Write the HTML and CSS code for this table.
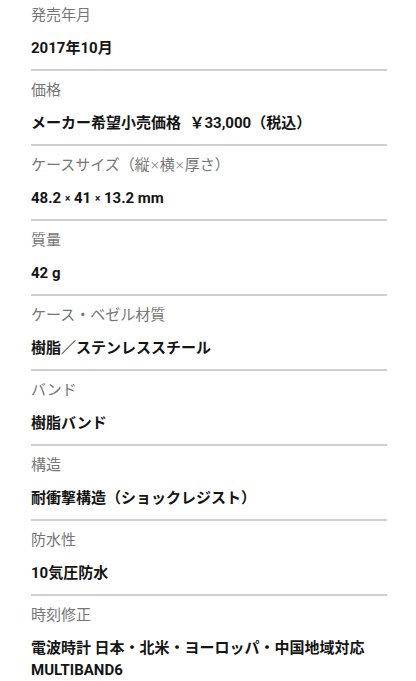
FILE: index.html
```html
<!DOCTYPE html>
<html lang="ja">
<head>
<meta charset="UTF-8">
<meta name="viewport" content="width=device-width, initial-scale=1.0">
<title>製品仕様</title>
<link rel="stylesheet" href="styles.css">
</head>
<body>
  <!-- Spec list -->
  <dl class="specs">
    <div class="spec-row">
      <dt class="spec-label">発売年月</dt>
      <dd class="spec-value"><span class="en">2017</span>年<span class="en">10</span>月</dd>
    </div>
    <div class="spec-row">
      <dt class="spec-label">価格</dt>
      <dd class="spec-value">メーカー希望小売価格 <span class="price">￥<span class="en">33,000</span></span>（税込）</dd>
    </div>
    <div class="spec-row">
      <dt class="spec-label">ケースサイズ（縦<span class="times">×</span>横<span class="times">×</span>厚さ）</dt>
      <dd class="spec-value"><span class="en">48.2 <span class="times">×</span> 41 <span class="times">×</span> 13.2 mm</span></dd>
    </div>
    <div class="spec-row">
      <dt class="spec-label">質量</dt>
      <dd class="spec-value"><span class="en">42 g</span></dd>
    </div>
    <div class="spec-row">
      <dt class="spec-label">ケース・ベゼル材質</dt>
      <dd class="spec-value">樹脂／ステンレススチール</dd>
    </div>
    <div class="spec-row">
      <dt class="spec-label">バンド</dt>
      <dd class="spec-value">樹脂バンド</dd>
    </div>
    <div class="spec-row">
      <dt class="spec-label">構造</dt>
      <dd class="spec-value">耐衝撃構造（ショックレジスト）</dd>
    </div>
    <div class="spec-row">
      <dt class="spec-label">防水性</dt>
      <dd class="spec-value"><span class="en">10</span>気圧防水</dd>
    </div>
    <div class="spec-row">
      <dt class="spec-label">時刻修正</dt>
      <dd class="spec-value">電波時計 日本・北米・ヨーロッパ・中国地域対応<br><span class="en">MULTIBAND6</span></dd>
    </div>
  </dl>
</body>
</html>
```

FILE: styles.css
```css
body {
  margin: 0;
  padding: 0 29px 0 31px;
  background-color: #FFFFFF;
  font-family: "Noto Sans CJK JP", "Noto Sans", sans-serif;
  color: #1a1a1a;
  overflow: hidden;
}

.specs {
  margin: -4px 0 0 0;
}

.spec-row {
  display: flex;
  flex-direction: column;
  gap: 12px;
  padding: 8px 0 11px;
  border-bottom: 2px solid #d0d0d0;
}

.spec-label {
  margin: 0;
  font-size: 15px;
  line-height: 20px;
  font-weight: 400;
  color: #767676;
}

.spec-value {
  margin: 0;
  font-size: 15px;
  line-height: 22px;
  font-weight: 700;
  color: #141414;
}

/* latin runs use a narrower face; line-height 1 keeps the row height steady */
.en {
  font-family: Roboto, sans-serif;
  line-height: 1;
}

.price {
  margin-left: 5px;
}

/* small multiplication sign, as in the catalogue */
.times {
  font-size: 10px;
  line-height: 1;
  vertical-align: 1px;
}
```
